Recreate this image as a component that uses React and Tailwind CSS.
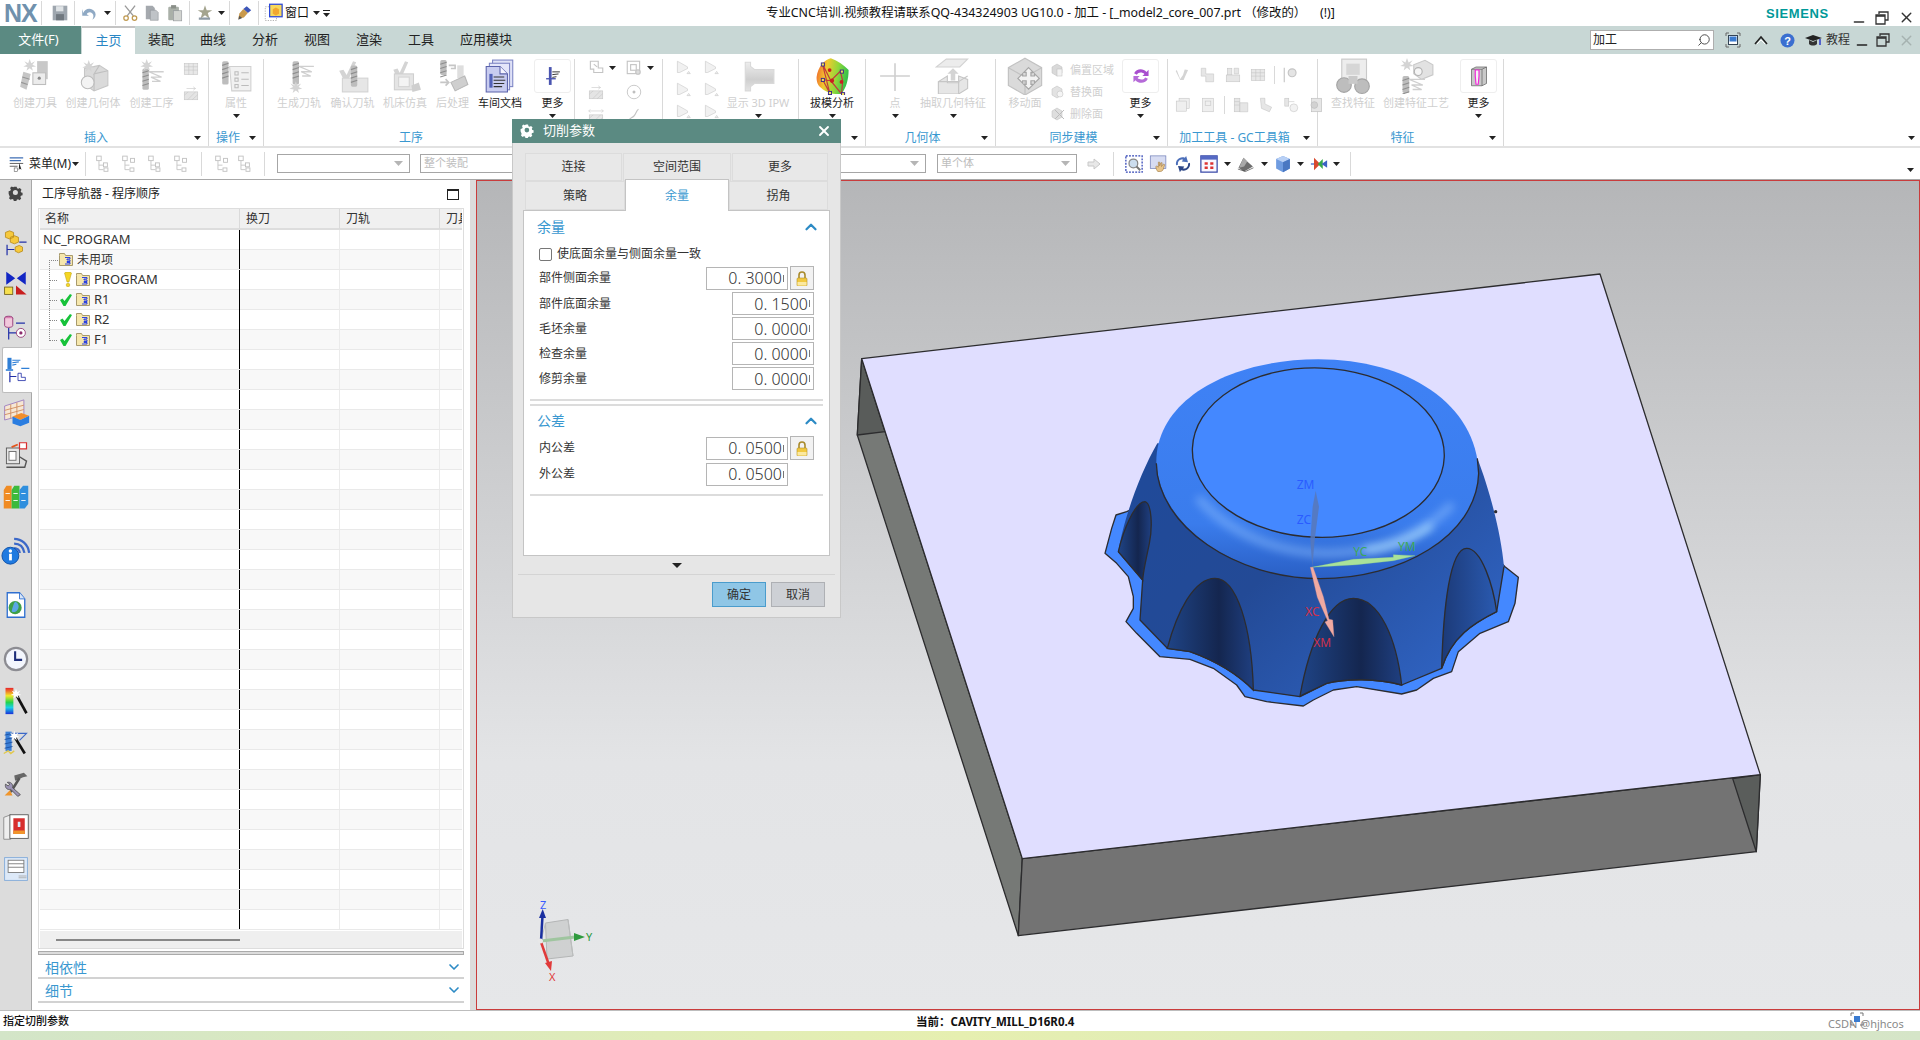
import React from 'react';
import { ChevronUp, ChevronDown, X, Search, Minus } from 'lucide-react';

// ---- tiny helpers ----
const Tri = ({ className = '' }) => (
  <svg width="7" height="4" viewBox="0 0 7 4" className={className}>
    <path d="M0 0h7L3.5 4z" fill="#222" />
  </svg>
);

const Ico = ({ s = 32, children, className = '' }) => (
  <svg width={s} height={s} viewBox="0 0 32 32" className={className}>
    {children}
  </svg>
);

const Burst = ({ x = 10, y = 6, c = '#d4d4d4' }) => (
  <path
    transform={`translate(${x} ${y})`}
    d="M0-6L1.4-2 5-4 2.6-.6 6 1 2 1.6 3 5 0 2.6-3 5-2 1.6-6 1-2.6-.6-5-4-1.4-2z"
    fill={c}
  />
);

const Drill = ({ x = 8, y = 6, h = 20, c = '#bdbdbd' }) => (
  <g transform={`translate(${x} ${y})`}>
    <rect width="6" height={h} rx="1.5" fill={c} />
    <path d={`M0 4l6-2M0 8l6-2M0 12l6-2M0 16l6-2`} stroke="#8e8e8e" strokeWidth="1" />
  </g>
);

const Lines = ({ x = 14, y = 8, c = '#cfcfcf' }) => (
  <path transform={`translate(${x} ${y})`} d="M0 1h14M0 1l12 5H2M2 6l9 4H3" fill="none" stroke={c} strokeWidth="1.2" />
);

// ---- ribbon icons (mostly greyed out) ----
const CreateTool = () => (
  <Ico s={34}>
    <Burst x={11} y={6} />
    <path d="M5 12l7 2-4 15-6-3z" fill="#c6c6c6" />
    <path d="M4 17l7 2M3 22l6 2" stroke="#969696" />
    <rect x="18" y="2" width="10" height="17" fill="#c8c8c8" />
    <rect x="14" y="13" width="12" height="11" fill="#ececec" stroke="#bdbdbd" />
    <circle cx="20" cy="18" r="1.5" fill="#8c8c8c" />
  </Ico>
);
const CreateGeom = () => (
  <Ico s={34}>
    <path d="M8 9l14-3 8 5v14l-13 5-9-6z" fill="#dadada" stroke="#c6c6c6" />
    <path d="M22 6v0l-5 8 13-3M17 14v16" stroke="#c0c0c0" fill="none" />
    <ellipse cx="11" cy="22" rx="6" ry="6" fill="#f3f3f3" stroke="#bcbcbc" />
    <Burst x={12} y={7} />
  </Ico>
);
const CreateOper = () => (
  <Ico s={34}>
    <Drill x={7} y={9} h={20} />
    <Lines x={13} y={11} />
    <Burst x={11} y={6} />
  </Ico>
);
const AttrIcon = () => (
  <Ico s={34}>
    <Drill x={3} y={2} h={22} />
    <path d="M10 7h20v23H12z" fill="#f1f1f1" stroke="#d0d0d0" />
    <path d="M15 12h3v3h-3zM15 18h3v3h-3zM15 24h3v3h-3zM21 13h7M21 19h7M21 25h7" fill="none" stroke="#bcbcbc" />
  </Ico>
);
const GenPath = () => (
  <Ico s={34}>
    <Drill x={10} y={2} h={22} />
    <Lines x={16} y={6} />
    <Burst x={13} y={27} />
  </Ico>
);
const Verify = () => (
  <Ico s={34}>
    <path d="M3 11l4-1 3 5 6-13 3 1-8 18h-3z" fill="#d4d4d4" />
    <rect x="6" y="18" width="24" height="13" fill="#e6e6e6" stroke="#d2d2d2" />
    <Drill x={14} y={6} h={20} />
  </Ico>
);
const MachineSim = () => (
  <Ico s={34}>
    <path d="M5 10l4-1 2 4 5-11 3 1-7 16h-3z" fill="#d4d4d4" />
    <rect x="6" y="14" width="18" height="15" fill="#e4e4e4" stroke="#cfcfcf" />
    <rect x="10" y="17" width="10" height="9" fill="#f4f4f4" stroke="#d4d4d4" />
    <path d="M22 25l7-3 2 7-8 2z" fill="#cfcfcf" />
  </Ico>
);
const PostProc = () => (
  <Ico s={34}>
    <Drill x={4} y={1} h={14} />
    <path d="M12 6h6v3h-4M4 22h8M9 19l3 3-3 3" fill="none" stroke="#c6c6c6" strokeWidth="1.5" />
    <rect x="20" y="6" width="6" height="12" fill="#dedede" />
    <path d="M14 22l13-6 3 8-12 6z" fill="#cfcfcf" stroke="#b8b8b8" />
  </Ico>
);
const ShopDoc = () => (
  <Ico s={34}>
    <rect x="9" y="1" width="19" height="25" fill="#dfe2f7" stroke="#7c84c4" />
    <rect x="6" y="4" width="19" height="25" fill="#e4e6fa" stroke="#7c84c4" />
    <path d="M3 7h13l7 7v17H3z" fill="#c8ccf0" stroke="#5a62aa" />
    <path d="M16 7v7h7" fill="#f5f5ff" stroke="#5a62aa" />
    <rect x="6" y="14" width="3" height="13" fill="#5160b8" />
    <path d="M10 17h10M10 20h11M10 23h10M10 26h8" stroke="#333" strokeWidth="1" />
  </Ico>
);
const MoreTool = () => (
  <Ico s={22}>
    <rect x="10" y="3" width="4" height="26" fill="#4a55b0" />
    <path d="M6 20h14" stroke="#4a55b0" strokeWidth="2" />
    <path d="M15 10h11M15 14l9-1M15 18l6-1" stroke="#333" strokeWidth="1.4" />
  </Ico>
);
const Ipw = () => (
  <Ico s={34}>
    <defs>
      <linearGradient id="ipw" x1="0" y1="0" x2="0" y2="1">
        <stop offset="0" stopColor="#ededed" />
        <stop offset=".6" stopColor="#cfcfcf" />
        <stop offset="1" stopColor="#e4e4e4" />
      </linearGradient>
    </defs>
    <path d="M4 3h5v4l4 3h18v13H13l-4 3v4H4z" fill="url(#ipw)" stroke="#d9d9d9" />
  </Ico>
);
const DraftIcon = () => (
  <Ico s={38}>
    <defs>
      <linearGradient id="draft" x1="0" y1="0" x2="1" y2=".2">
        <stop offset="0" stopColor="#f0562c" />
        <stop offset=".35" stopColor="#f2c92f" />
        <stop offset=".7" stopColor="#8fd83a" />
        <stop offset="1" stopColor="#3bc24a" />
      </linearGradient>
    </defs>
    <path d="M3 17C4 8 10 2 15 1c6 2 11 6 15 10 0 8-2 15-6 20-7 1-14-2-17-5-3-2-4-5-4-9z" fill="url(#draft)" />
    <path d="M8 6l6 24M8 6l7 14 8-8M15 20l9 11M15 20l-7-1M8 19l6 11M23 12l2 8-1 11" fill="none" stroke="#c23b3b" strokeWidth="1" />
    <g fill="#f5e253" stroke="#3a2a8a" strokeWidth=".8">
      <rect x="7" y="5" width="2.6" height="2.6" />
      <rect x="7" y="18" width="2.6" height="2.6" />
      <rect x="24" y="30" width="2.6" height="2.6" />
      <rect x="13" y="29" width="2.6" height="2.6" />
      <rect x="23" y="11" width="2.6" height="2.6" />
    </g>
    <circle cx="14" cy="11" r="1.6" fill="#c91f1f" />
    <circle cx="16" cy="20" r="1.8" fill="#c91f1f" />
    <circle cx="24" cy="21" r="1.6" fill="#c91f1f" />
  </Ico>
);
const PointIcon = () => (
  <Ico s={34}>
    <path d="M16 4v26M2 16h28" stroke="#cfcfcf" strokeWidth="1.5" />
  </Ico>
);
const ExtractIcon = () => (
  <Ico s={36}>
    <path d="M9 0h19l-7 7H0z" fill="#ececec" stroke="#d2d2d2" transform="translate(1 1)" />
    <path d="M14 13h4v6h3l-5 0z M16 9l5 5h-3v6h-4v-6h-3z" fill="#d4d4d4" />
    <path d="M3 21l8-5v6h10v-6l8 3v8l-8 5H3z" fill="#e6e6e6" stroke="#c6c6c6" />
    <path d="M3 21h18v11M21 21l8-5" stroke="#c6c6c6" fill="none" />
  </Ico>
);
const MoveFace = () => (
  <Ico s={38}>
    <path d="M16 1l14 8v15l-14 8-14-8V9z" fill="#dadada" stroke="#c2c2c2" />
    <path d="M2 9l14 8 14-8M16 17v15" fill="none" stroke="#c2c2c2" />
    <path d="M19 9l4 4h-2v3h3v-2l4 4-4 4v-2h-3v3h2l-4 4-4-4h2v-3h-3v2l-4-4 4-4v2h3v-3h-2z" fill="#f3f3f3" stroke="#a6a6a6" />
  </Ico>
);
const SmallGrey = ({ kind = 0, s = 18 }) => {
  const shapes = {
    0: <path d="M6 4h14v12h8v8H12v-6H6zM12 9l6 5" fill="none" stroke="#c4c4c4" strokeWidth="2" />,
    1: <g fill="none" stroke="#c4c4c4" strokeWidth="2"><rect x="4" y="4" width="22" height="22" /><rect x="10" y="10" width="10" height="10" /><circle cx="23" cy="23" r="4" fill="#ddd" /></g>,
    2: <g fill="#e4e4e4" stroke="#c4c4c4"><rect x="4" y="14" width="24" height="14" /><path d="M4 20l7-6M10 28l14-14M18 28l10-9" /><path d="M8 8h16M20 5l4 3-4 3" fill="none" /></g>,
    3: <g fill="#e8e8e8" stroke="#c4c4c4"><rect x="4" y="14" width="24" height="14" /><path d="M4 20l7-6M10 28l14-14M18 28l10-9M3 7h26M6 4L3 7l3 3M26 4l3 3-3 3" fill="none" /></g>,
    4: <g fill="none" stroke="#c4c4c4" strokeWidth="1.6"><circle cx="16" cy="16" r="12" /><circle cx="16" cy="16" r="2" fill="#aaa" /></g>,
    5: <path d="M24 4c-4 2-4 8-8 12s-10 4-10 10" fill="none" stroke="#c4c4c4" strokeWidth="2" />,
    6: <path d="M6 4l4 2 14 8v3L10 24H6zM26 22l3 4h-6z" fill="#f1f1f1" stroke="#c4c4c4" />,
    7: <g fill="#d9d9d9" stroke="#bcbcbc"><path d="M4 10l10-6 10 6v12l-10 6-10-6z" /><rect x="14" y="14" width="10" height="14" fill="#f2f2f2" /></g>,
    8: <g fill="#e2e2e2" stroke="#bcbcbc"><path d="M4 10l10-6 10 6v12l-10 6-10-6z" /><circle cx="20" cy="20" r="6" fill="#f5f5f5" /></g>,
    9: <g fill="#dedede" stroke="#bcbcbc"><path d="M4 10l10-6 10 6v12l-10 6-10-6z" /><path d="M10 8l18 18M10 26L28 8" strokeWidth="2" /></g>,
    10: <path d="M5 7l6 16 5-7 3-10 6 1-8 18h-6L3 9z" fill="#d4d4d4" />,
    11: <g fill="#e6e6e6" stroke="#c4c4c4"><path d="M4 4h8v10h14v14H12V18H4z" /></g>,
    12: <g fill="#e6e6e6" stroke="#c4c4c4"><rect x="6" y="4" width="8" height="12" /><rect x="4" y="16" width="24" height="12" /><path d="M18 4h8v10h-8z" /></g>,
    13: <g fill="#e8e8e8" stroke="#c4c4c4"><rect x="4" y="6" width="24" height="20" /><path d="M4 12h24M4 18h24M12 6v20M20 6v20" /></g>,
    14: <g fill="none" stroke="#c4c4c4" strokeWidth="2"><path d="M4 3v26" /><circle cx="18" cy="12" r="7" fill="#e4e4e4" /></g>,
    15: <g fill="#efefef" stroke="#c4c4c4"><rect x="9" y="4" width="18" height="18" /><rect x="4" y="9" width="18" height="18" /></g>,
    16: <g fill="#efefef" stroke="#c4c4c4"><rect x="6" y="4" width="20" height="24" /><rect x="11" y="9" width="10" height="8" /></g>,
    17: <g fill="#e6e6e6" stroke="#c4c4c4"><rect x="4" y="4" width="10" height="24" /><path d="M14 12h14v16H14z" /><path d="M4 10h10M4 16h10" /></g>,
    18: <g fill="#e6e6e6" stroke="#c4c4c4"><path d="M6 4h8v10l12 6-4 8-14-6z" /></g>,
    19: <g fill="#e6e6e6" stroke="#c4c4c4"><rect x="5" y="4" width="7" height="14" /><path d="M12 10h10" /><circle cx="21" cy="21" r="7" fill="#f2f2f2" /></g>,
    20: <g fill="#e6e6e6" stroke="#b8b8b8"><rect x="8" y="4" width="18" height="24" /><circle cx="13" cy="16" r="6" fill="#d2d2d2" /></g>,
  };
  return <Ico s={s}>{shapes[kind]}</Ico>;
};
const Binoculars = () => (
  <Ico s={36}>
    <rect x="6" y="1" width="22" height="20" fill="#ededed" stroke="#c9c9c9" />
    <rect x="10" y="5" width="12" height="10" fill="#d6d6d6" />
    <circle cx="8" cy="24" r="6.5" fill="#bdbdbd" stroke="#a4a4a4" />
    <circle cx="24" cy="25" r="6.5" fill="#bdbdbd" stroke="#a4a4a4" />
    <path d="M12 16h8v7h-8z" fill="#c9c9c9" />
  </Ico>
);
const FeatureProc = () => (
  <Ico s={36}>
    <path d="M14 6l10-4 7 4v9l-10 4-7-5z" fill="#e2e2e2" stroke="#c9c9c9" />
    <circle cx="18" cy="12" r="3.5" fill="#f5f5f5" stroke="#b2b2b2" />
    <Burst x={8} y={6} />
    <Drill x={4} y={16} h={15} />
    <Lines x={10} y={18} />
  </Ico>
);
const MoreCube = () => (
  <Ico s={24}>
    <path d="M6 7l6-3h14v22l-6 3H6z" fill="#c9c9c9" stroke="#666" />
    <path d="M6 7h14v22M20 7l6-3" fill="none" stroke="#666" />
    <path d="M11 8h5v8l-1 11h-3l-1-11z" fill="#f4f4f4" stroke="#f02bd8" strokeWidth="1.6" />
  </Ico>
);
const MoreSync = () => (
  <Ico s={22}>
    <path d="M6 12c3-7 13-8 18-2l3-3v9h-9l3-3c-3-3-9-3-11 1z" fill="#a94fcf" />
    <path d="M26 20c-3 7-13 8-18 2l-3 3v-9h9l-3 3c3 3 9 3 11-1z" fill="#b56ad8" />
  </Ico>
);

// ---- quick access / toolbar icons ----
const SaveIcon = () => (
  <Ico s={18}>
    <path d="M3 3h26v26H3z" fill="#9ea6ae" />
    <rect x="9" y="4" width="13" height="9" fill="#dfe3e6" />
    <rect x="9" y="18" width="14" height="11" fill="#70787f" />
  </Ico>
);
const UndoIcon = () => (
  <Ico s={18}>
    <path d="M6 16c2-9 16-11 21-1 2 5 0 10-5 13 2-4 3-8 0-11-4-4-8-2-10 1l4 3H4V9z" fill="#8fa9c4" />
  </Ico>
);
const CutIcon = () => (
  <Ico s={18}>
    <path d="M25 3L11 21M7 3l15 18" stroke="#9a9a9a" strokeWidth="2.4" />
    <circle cx="9" cy="25" r="4" fill="none" stroke="#c09a50" strokeWidth="2.2" />
    <circle cx="24" cy="25" r="4" fill="none" stroke="#c09a50" strokeWidth="2.2" />
  </Ico>
);
const CopyIcon = () => (
  <Ico s={18}>
    <path d="M5 3h12l4 4v20H5z" fill="#a5a9ae" />
    <path d="M13 11h10l4 4v14H13z" fill="#bfc3c7" stroke="#8c9095" />
  </Ico>
);
const PasteIcon = () => (
  <Ico s={18}>
    <rect x="4" y="5" width="19" height="24" rx="2" fill="#aab0a8" />
    <rect x="9" y="2" width="9" height="6" fill="#8a8f88" />
    <rect x="13" y="12" width="15" height="18" fill="#d2d4d0" stroke="#8c9095" />
  </Ico>
);
const StarIcon = () => (
  <Ico s={18}>
    <path d="M16 2l3 9h10l-8 5 3 10-8-6-8 6 3-10-8-5h10z" fill="#a4a48e" />
    <rect x="5" y="24" width="20" height="4" fill="#8e9aa4" />
  </Ico>
);
const BrushIcon = () => (
  <Ico s={18}>
    <path d="M19 4l8 7-6 5-8-7z" fill="#3d56b8" />
    <path d="M13 9l8 7-7 8-10 2 2-9z" fill="#c99a4d" />
    <path d="M6 21l5 4-7 3z" fill="#555" />
  </Ico>
);
const WindowIcon = () => (
  <Ico s={20}>
    <rect x="2" y="6" width="18" height="22" fill="none" stroke="#888" strokeDasharray="2 2" />
    <rect x="9" y="2" width="20" height="20" fill="#f7d85b" stroke="#2b47d9" strokeWidth="2" />
    <path d="M14 10l5-3 5 3v7l-5 3-5-3z" fill="#f2a72e" />
  </Ico>
);
const MenuIcon = () => (
  <Ico s={18}>
    <path d="M3 5h24M3 10h20" stroke="#3f6fb5" strokeWidth="2" />
    <path d="M3 15h24M3 20h14" stroke="#555" strokeWidth="1.6" />
    <path d="M20 14l4 12-3-2-2 3z" fill="#222" />
    <rect x="11" y="23" width="6" height="6" fill="none" stroke="#555" />
  </Ico>
);
const Tree = ({ kind = 0 }) => (
  <Ico s={18}>
    <rect x="3" y="2" width="8" height="8" fill="none" stroke="#c0c0c0" strokeWidth="1.6" />
    <path d="M7 10v16M7 18h8M7 26h8" stroke="#c4c4c4" strokeWidth="1.6" fill="none" />
    <rect x={kind ? 17 : 15} y={kind ? 6 : 14} width="7" height="7" fill="none" stroke="#c0c0c0" strokeWidth="1.6" />
    <rect x="16" y="23" width="7" height="6" fill="none" stroke="#c0c0c0" strokeWidth="1.6" />
  </Ico>
);
const ViewFit = () => (
  <Ico s={20}>
    <rect x="3" y="3" width="26" height="26" fill="#fff" stroke="#3144b5" strokeDasharray="3 2" strokeWidth="2" />
    <circle cx="15" cy="15" r="7" fill="#cde" stroke="#888" strokeWidth="2" />
    <path d="M20 20l6 6" stroke="#777" strokeWidth="3" />
  </Ico>
);
const ViewPan = () => (
  <Ico s={20}>
    <rect x="2" y="3" width="25" height="20" fill="#d7dcf2" stroke="#6070b0" />
    <path d="M14 28c-3-4-4-8-2-9l3 2v-8l2 0v6l2-5 2 0-1 6 3-4 2 1-2 7c-1 3-3 4-5 4z" fill="#e8c48a" stroke="#a07c44" />
  </Ico>
);
const ViewRotate = () => (
  <Ico s={20}>
    <path d="M5 18c-2-8 6-15 14-12l2-3 3 10-10-1 2-3c-5-1-9 3-8 8z" fill="#4c6fba" />
    <path d="M27 14c2 8-6 15-14 12l-2 3-3-10 10 1-2 3c5 1 9-3 8-8z" fill="#2c4687" />
  </Ico>
);
const ViewGrid = () => (
  <Ico s={20}>
    <rect x="3" y="3" width="26" height="26" fill="#f7f7ff" stroke="#3a4aa8" strokeWidth="2" />
    <rect x="3" y="3" width="26" height="6" fill="#5569c4" />
    <path d="M9 13h5v4H9zM18 13h5v4h-5zM9 20h5v4H9zM18 20h5v4h-5z" fill="#d33" />
  </Ico>
);
const ViewShade = () => (
  <Ico s={20}>
    <path d="M4 22l8-16 6 6 9 8-14 8z" fill="#6d6d6d" />
    <path d="M12 6l6 6-5 8-8 2z" fill="#a8a8a8" />
    <path d="M3 24l12 4 13-6" stroke="#333" fill="none" />
  </Ico>
);
const ViewCube = () => (
  <Ico s={20}>
    <path d="M5 8l11-5 11 5v15l-11 6-11-6z" fill="#6f9ce0" />
    <path d="M5 8l11 5 11-5-11-5z" fill="#b8d0f5" />
    <path d="M16 13v16l11-6V8z" fill="#4a78c2" />
  </Ico>
);
const ViewTriad = () => (
  <Ico s={20}>
    <path d="M8 6l10 10-10 10z" fill="#d94a2f" />
    <path d="M14 16l8-8v16z" fill="#36a84a" />
    <path d="M20 16l9-6v12z" fill="#3b62c4" />
    <path d="M3 16h5" stroke="#3b62c4" strokeWidth="2" />
  </Ico>
);

// ---- navigator strip icons ----
const Cubes = () => (
  <Ico s={26}>
    <path d="M3 3l5-2 5 2v6l-5 2-5-2zM9 9l5-2 5 2v6l-5 2-5-2z" fill="#f6c93d" stroke="#b88a1a" />
    <path d="M15 21l5-2 4 2v5l-5 2-4-2z" fill="#f6c93d" stroke="#b88a1a" />
    <path d="M5 18v13M5 24h9M20 15h9" stroke="#2230a8" strokeWidth="1.5" fill="none" />
  </Ico>
);
const Bowtie = () => (
  <Ico s={26}>
    <path d="M4 2l11 8-11 8zM28 2L17 10l11 8z" fill="#1226c4" />
    <rect x="2" y="21" width="10" height="9" fill="#f7e04f" stroke="#6a5a10" />
    <path d="M16 19l13 11H16z" fill="#c81e1e" />
  </Ico>
);
const PartNav = () => (
  <Ico s={26}>
    <ellipse cx="7" cy="4" rx="5" ry="2.5" fill="#d980b2" stroke="#8c2a6c" />
    <path d="M2 4v9c0 3 10 3 10 0V4" fill="#f1c8dc" stroke="#8c2a6c" />
    <path d="M7 16v14M7 22h9M16 10h11" stroke="#2230a8" strokeWidth="1.5" fill="none" />
    <circle cx="22" cy="22" r="5.5" fill="#fff" stroke="#8c2a6c" />
    <circle cx="22" cy="22" r="2" fill="#8c2a6c" />
  </Ico>
);
const OpNav = () => (
  <Ico s={26}>
    <rect x="3" y="1" width="5" height="14" fill="#2f7fd6" />
    <path d="M1 16h9" stroke="#2f7fd6" strokeWidth="2" />
    <path d="M9 4h10M9 7l8-1M9 10l5-1M20 14h10" stroke="#2f7fd6" strokeWidth="1.3" fill="none" />
    <path d="M6 18v13M6 24h8" stroke="#2230a8" strokeWidth="1.5" fill="none" />
    <path d="M16 20h4v5h5v4h-9z" fill="#fff" stroke="#2230a8" />
  </Ico>
);
const TableNav = () => (
  <Ico s={28}>
    <path d="M3 8l22-7v17L3 24z" fill="#f6e7d4" stroke="#9a7cc0" />
    <path d="M3 13l22-6M3 18l22-6M10 6v16M17 4v16" stroke="#d08a5c" />
    <path d="M12 20l10-4 9 3-10 5z" fill="#f28e2b" />
    <path d="M12 20v8l9 3v-7zM21 24v7l10-4v-8z" fill="#2a7de0" />
  </Ico>
);
const MachineNav = () => (
  <Ico s={28}>
    <rect x="5" y="8" width="15" height="18" fill="#e6e6e6" stroke="#555" />
    <rect x="8" y="12" width="8" height="10" fill="#fff" stroke="#666" />
    <path d="M20 18l8 5-2 7H5" fill="none" stroke="#555" strokeWidth="1.6" />
    <path d="M11 7l7-3" stroke="#e2561d" strokeWidth="2" />
    <path d="M20 2h8v7h-8z" fill="#fff" stroke="#d92e2e" strokeWidth="1.4" />
  </Ico>
);
const Books = () => (
  <Ico s={28}>
    <path d="M2 8l3-5h6v26H2z" fill="#f08b23" />
    <path d="M11 8l3-5h6v26h-9z" fill="#3cba3c" />
    <path d="M20 8l4-5h6v21l-4 5h-6z" fill="#2f8fde" />
    <path d="M4 12h5M13 12h5M22 12h5M4 20h5M13 20h5M22 20h5" stroke="#fff" />
  </Ico>
);
const InfoFeed = () => (
  <Ico s={30}>
    <path d="M14 3c8 0 15 6 16 15M14 8c6 0 10 4 11 10M14 13c3 0 6 2 6 5" fill="none" stroke="#3b68c8" strokeWidth="2.4" />
    <circle cx="10" cy="21" r="9" fill="#1f7ae0" stroke="#0d4fa8" />
    <rect x="8.6" y="19" width="3" height="7" fill="#fff" />
    <circle cx="10" cy="16" r="1.8" fill="#fff" />
  </Ico>
);
const GlobeDoc = () => (
  <Ico s={28}>
    <path d="M6 2h14l6 7v21H6z" fill="#fff" stroke="#2f6fd0" strokeWidth="1.5" />
    <path d="M20 2v7h6" fill="#d9e6f8" stroke="#2f6fd0" />
    <circle cx="15" cy="19" r="7.5" fill="#3ea04a" />
    <path d="M15 12c4 2 5 6 3 9-2 3-5 4-7 2 1-4 2-8 4-11z" fill="#5ba7e6" />
  </Ico>
);
const Clock = () => (
  <Ico s={28}>
    <circle cx="16" cy="16" r="14" fill="#8c8c92" />
    <circle cx="16" cy="16" r="11.5" fill="#f3f6fd" />
    <path d="M15 7v10h8" stroke="#1e2e7a" strokeWidth="2.4" fill="none" />
  </Ico>
);
const Rainbow = () => (
  <Ico s={28}>
    <defs>
      <linearGradient id="rb" x1="0" y1="0" x2="0" y2="1">
        <stop offset="0" stopColor="#e8222a" />
        <stop offset=".3" stopColor="#f4e82a" />
        <stop offset=".55" stopColor="#22d34a" />
        <stop offset=".75" stopColor="#1ad0e8" />
        <stop offset="1" stopColor="#1a2fd8" />
      </linearGradient>
    </defs>
    <rect x="4" y="1" width="9" height="30" fill="url(#rb)" />
    <path d="M17 10l11 20" stroke="#111" strokeWidth="3" />
    <Burst x={16} y={8} c="#fff" />
  </Ico>
);
const DrillWand = () => (
  <Ico s={28}>
    <rect x="4" y="3" width="7" height="22" fill="#3b7fd6" />
    <path d="M3 7l9-2M3 12l9-2M3 17l9-2M3 22l9-2" stroke="#1b4fa0" />
    <path d="M12 5h16l-8 8M12 9l6 4" fill="none" stroke="#3b68c8" strokeWidth="1.3" />
    <path d="M2 28l5-3 3 3 4-3" stroke="#e2c84c" strokeWidth="1.6" fill="none" />
    <path d="M15 10l11 18" stroke="#111" strokeWidth="3" />
    <Burst x={14} y={8} c="#fff" />
  </Ico>
);
const Wrench = () => (
  <Ico s={28}>
    <path d="M14 5l11-3 4 4-5 1-9 4z" fill="#666" />
    <path d="M20 8L10 24" stroke="#555" strokeWidth="3" />
    <path d="M6 13c4-1 7 2 6 6l9 8-3 2-8-8c-4 1-7-2-6-6l3 2 2-2z" fill="#9b93b5" stroke="#555" />
    <path d="M3 28l6-6 3 6z" fill="#f0952b" />
  </Ico>
);
const RedBook = () => (
  <Ico s={28}>
    <path d="M2 5l8-3v28l-8 0z" fill="#eee" stroke="#888" />
    <rect x="9" y="2" width="21" height="27" fill="#fff" stroke="#555" />
    <rect x="13" y="6" width="13" height="18" fill="#d72e2e" />
    <rect x="13" y="20" width="13" height="4" fill="#f0952b" />
    <path d="M18 10h3v6h-3z" fill="#d8ecff" />
  </Ico>
);
const WindowDoc = () => (
  <Ico s={28}>
    <rect x="3" y="3" width="26" height="26" fill="#dde9f8" stroke="#7fa8d8" />
    <rect x="7" y="6" width="18" height="14" fill="#fff" stroke="#777" />
    <path d="M7 10h18M7 14h18" stroke="#777" />
    <path d="M19 24h9M19 26h9" stroke="#aaa" />
  </Ico>
);
const Gear = ({ c = '#333', s = 16 }) => (
  <Ico s={s}>
    <path
      fillRule="evenodd"
      fill={c}
      d="M13 2h6l1 4 3 1.300 3.500-2 4 4-2 3.500 1.300 3 3.200.700v6l-4 1-1.200 3 2 3.500-4 4-3.500-2-3 1.300-1 3.200h-6l-1-4-3-1.200-3.500 2-4-4 2-3.500-1.300-3L0 19v-6l4-1 1.300-3-2-3.500 4-4 3.500 2 2-1zM16 10a6 6 0 100 12 6 6 0 000-12z"
      transform="scale(.9) translate(1.500 -.5)"
    />
  </Ico>
);
const Folder = () => (
  <svg width="14" height="13" viewBox="0 0 14 13">
    <path d="M.5 2.500V.5h5l1 2h7v10H.5z" fill="#f6e7ad" stroke="#a89a6c" />
    <path d="M6 4.500h5v1.500H8v1h3v1.500H8v1h3V11H6" fill="none" stroke="#1630e6" strokeWidth=".9" />
  </svg>
);
const Check = () => (
  <svg width="12" height="12" viewBox="0 0 12 12">
    <path d="M0 6l2.500-1.500L4.500 7 10 0l2 1-6.500 11H3.500z" fill="#17c23a" />
  </svg>
);
const Bang = () => (
  <svg width="8" height="15" viewBox="0 0 8 15">
    <path d="M.5 1C2-.5 6-.5 7.500 1L5 10H3z" fill="#f5d624" stroke="#b79d12" strokeWidth=".5" />
    <circle cx="4" cy="13" r="1.800" fill="#f5d624" stroke="#b79d12" strokeWidth=".5" />
  </svg>
);
const LockIcon = () => (
  <svg width="12" height="15" viewBox="0 0 12 15">
    <path d="M3 7V4a3 3 0 016 0v3" fill="none" stroke="#a88a2c" strokeWidth="1.600" />
    <rect x="1" y="7" width="10" height="8" rx="1" fill="#f2c93f" stroke="#b3902a" strokeWidth=".6" />
    <rect x="1.500" y="11" width="9" height="3.500" fill="#fbe9a0" />
  </svg>
);

// ---- ribbon parts ----
const RibbonBtn = ({ w, icon, label, muted = true, arrow = false }) => (
  <div className={`flex flex-col items-center shrink-0 ${w}`}>
    <div className="h-[34px] flex items-center justify-center">{icon}</div>
    <div className={`mt-[2px] h-4 leading-4 text-[11px] whitespace-nowrap ${muted ? 'text-[#cfcfcf]' : 'text-[#222]'}`}>{label}</div>
    {arrow && <Tri className="mt-[3px]" />}
  </div>
);

const MoreBtn = ({ icon, w = 'w-[37px]', ml = 'ml-2' }) => (
  <div className={`flex flex-col items-center shrink-0 ${w} ${ml}`}>
    <div className="w-[37px] h-[34px] border border-[#eeeeee] rounded-[3px] flex items-center justify-center">{icon}</div>
    <div className="mt-[2px] h-4 leading-4 text-[11px] text-[#222]">更多</div>
    <Tri className="mt-[3px]" />
  </div>
);

const SmallRow = ({ kind, label }) => (
  <div className="flex items-center gap-1 h-[22px]">
    <SmallGrey kind={kind} s={16} />
    <span className="text-[11px] text-[#cfcfcf] whitespace-nowrap">{label}</span>
  </div>
);

const Group = ({ w, label, pad = '', arrow = true, children }) => (
  <div className={`flex flex-col h-[87px] shrink-0 border-r border-[#d9d9d9] ${w}`}>
    <div className={`flex flex-1 min-h-0 ${pad}`}>{children}</div>
    <div className="relative h-[16px] pr-[16px] text-center text-[12px] leading-4 text-[#3a98d0] whitespace-nowrap">
      {label}
      {arrow && <Tri className="absolute right-[7px] top-[6px]" />}
    </div>
  </div>
);

const Ribbon = () => (
  <div className="relative flex h-[94px] pt-[5px] bg-white border-b-2 border-[#e2e2e2]">
    <Group w="w-[209px]" label="插入" pad="pl-[6px]">
      <RibbonBtn w="w-[58px]" icon={<CreateTool />} label="创建刀具" />
      <RibbonBtn w="w-[58px]" icon={<CreateGeom />} label="创建几何体" />
      <RibbonBtn w="w-[59px]" icon={<CreateOper />} label="创建工序" />
      <div className="w-[20px] flex flex-col items-center gap-[6px] pt-[1px]">
        <SmallGrey kind={13} />
        <SmallGrey kind={2} />
      </div>
    </Group>
    <Group w="w-[55px]" label="操作">
      <RibbonBtn w="w-full" icon={<AttrIcon />} label="属性" arrow />
    </Group>
    <Group w="w-[311px]" label="工序" pad="pl-[8px]">
      <RibbonBtn w="w-[54px]" icon={<GenPath />} label="生成刀轨" />
      <RibbonBtn w="w-[53px]" icon={<Verify />} label="确认刀轨" />
      <RibbonBtn w="w-[52px]" icon={<MachineSim />} label="机床仿真" />
      <RibbonBtn w="w-[43px]" icon={<PostProc />} label="后处理" />
      <RibbonBtn w="w-[52px]" icon={<ShopDoc />} label="车间文档" muted={false} />
      <MoreBtn icon={<MoreTool />} />
    </Group>
    <Group w="w-[88px]" label="" arrow={false}>
      <div className="grid grid-cols-2 w-full pl-[12px] gap-y-[6px] content-start">
        {[0, 1, 2, 4, 3, 5].map((k) => (
          <div key={k} className="flex items-center h-[18px] w-[37px] gap-1">
            <SmallGrey kind={k} />
            {k < 2 && <Tri />}
          </div>
        ))}
      </div>
    </Group>
    <Group w="w-[136px]" label="" arrow={false}>
      <div className="w-[57px] pl-[11px] grid grid-cols-2 gap-x-[9px] gap-y-[4px] content-start shrink-0">
        {[6, 6, 6, 6, 6, 6].map((k, i) => (
          <SmallGrey key={i} kind={k} />
        ))}
      </div>
      <RibbonBtn w="w-[76px]" icon={<Ipw />} label="显示 3D IPW" arrow />
    </Group>
    <Group w="w-[67px]" label="">
      <RibbonBtn w="w-full" icon={<DraftIcon />} label="拔模分析" muted={false} arrow />
    </Group>
    <Group w="w-[130px]" label="几何体" pad="pl-[4px]">
      <RibbonBtn w="w-[50px]" icon={<PointIcon />} label="点" arrow />
      <RibbonBtn w="w-[66px]" icon={<ExtractIcon />} label="抽取几何特征" arrow />
    </Group>
    <Group w="w-[172px]" label="同步建模" pad="pl-[6px]">
      <RibbonBtn w="w-[46px]" icon={<MoveFace />} label="移动面" />
      <div className="w-[72px] pl-[2px] shrink-0">
        <SmallRow kind={7} label="偏置区域" />
        <SmallRow kind={8} label="替换面" />
        <SmallRow kind={9} label="删除面" />
      </div>
      <MoreBtn icon={<MoreSync />} ml="ml-[2px]" />
    </Group>
    <Group w="w-[150px]" label="加工工具 - GC工具箱" pad="pl-[6px]">
      <div className="flex flex-col gap-[12px] pt-[7px]">
        <div className="flex items-center gap-[7px]">
          {[10, 11, 12, 13].map((k) => (
            <SmallGrey key={k} kind={k} />
          ))}
          <span className="w-px h-[18px] bg-[#d9d9d9]" />
          <SmallGrey kind={14} />
        </div>
        <div className="flex items-center gap-[7px]">
          <SmallGrey kind={15} />
          <SmallGrey kind={16} />
          <span className="w-px h-[18px] bg-[#d9d9d9]" />
          {[17, 18, 19, 20].map((k) => (
            <SmallGrey key={k} kind={k} />
          ))}
        </div>
      </div>
    </Group>
    <Group w="w-[186px]" label="特征" pad="pl-[5px]">
      <RibbonBtn w="w-[60px]" icon={<Binoculars />} label="查找特征" />
      <RibbonBtn w="w-[66px]" icon={<FeatureProc />} label="创建特征工艺" />
      <MoreBtn icon={<MoreCube />} ml="ml-[11px]" />
    </Group>
    <Tri className="absolute right-[5px] top-[82px]" />
  </div>
);

const Select = ({ w, text = '' }) => (
  <div className={`h-[19px] flex items-center justify-between px-[3px] border border-[#a6a6a6] bg-white shrink-0 ${w}`}>
    <span className="text-[11px] text-[#bdbdbd] whitespace-nowrap">{text}</span>
    <svg width="9" height="5" viewBox="0 0 9 5" className="mr-[3px]">
      <path d="M0 0h9L4.500 5z" fill="#b5b5b5" />
    </svg>
  </div>
);
const Sep = ({ className = '' }) => <span className={`w-px h-[24px] bg-[#d9d9d9] shrink-0 ${className}`} />;

const Toolbar = () => (
  <div className="relative flex items-center h-[31px] bg-white">
    <div className="ml-[8px] mr-[3px]"><MenuIcon /></div>
    <span className="text-[12px] text-[#222] w-[43px] whitespace-nowrap">菜单(M)</span>
    <Tri />
    <Sep className="ml-[6px] mr-[9px]" />
    <div className="flex gap-[8px]">
      <Tree />
      <Tree kind={1} />
      <Tree />
      <Tree kind={1} />
    </div>
    <Sep className="ml-[10px] mr-[12px]" />
    <div className="flex gap-[5px]">
      <Tree kind={1} />
      <Tree />
    </div>
    <Sep className="ml-[9px] mr-[12px]" />
    <Select w="w-[133px]" />
    <Select w="w-[506px] ml-[10px]" text="整个装配" />
    <Select w="w-[140px] ml-[11px]" text="单个体" />
    <svg width="14" height="12" viewBox="0 0 14 12" className="ml-[10px] mr-[12px]">
      <path d="M1 4h6V1l6 5-6 5V8H1z" fill="#e8e8e8" stroke="#c8c8c8" />
    </svg>
    <Sep className="mr-[10px]" />
    <div className="flex items-center">
      <ViewFit />
      <span className="w-[5px]" />
      <ViewPan />
      <span className="w-[4px]" />
      <ViewRotate />
      <span className="w-[6px]" />
      <ViewGrid />
      <Tri className="ml-[5px] mr-[5px]" />
      <ViewShade />
      <Tri className="ml-[5px] mr-[5px]" />
      <ViewCube />
      <Tri className="ml-[4px] mr-[5px]" />
      <ViewTriad />
      <Tri className="ml-[4px]" />
    </div>
    <Sep className="ml-[10px]" />
    <Tri className="absolute right-[6px] top-[20px]" />
  </div>
);

// ---- navigator ----
const treeRows = [
  { key: 'nc', label: 'NC_PROGRAM', pad: 'pl-[3px]' },
  { key: 'un', label: '未用项', pad: 'pl-[19px]', dot: true, folder: true, cjk: true },
  { key: 'pr', label: 'PROGRAM', pad: 'pl-[24px]', dot: true, folder: true, status: 'bang' },
  { key: 'r1', label: 'R1', pad: 'pl-[20px]', dot: true, folder: true, status: 'check' },
  { key: 'r2', label: 'R2', pad: 'pl-[20px]', dot: true, folder: true, status: 'check' },
  { key: 'f1', label: 'F1', pad: 'pl-[20px]', dot: true, folder: true, status: 'check' },
];
const rows = Array.from({ length: 35 }, (_, i) => treeRows[i] || { key: `e${i}` });

const TreeTable = () => (
  <div className="mx-[6px] border border-[#dddddd] pl-[1px] pr-[1px]">
    <div className="grid grid-cols-[200px_100px_100px_1fr] h-[21px] bg-[#f0f0f0] border-b-2 border-[#dddddd] text-[12px] text-[#333] leading-[20px]">
      <span className="pl-[5px] border-r border-[#dadada]">名称</span>
      <span className="pl-[6px] border-r border-[#dadada]">换刀</span>
      <span className="pl-[6px] border-r border-[#dadada]">刀轨</span>
      <span className="pl-[6px] overflow-hidden whitespace-nowrap">刀具</span>
    </div>
    <div className="relative">
      {rows.map((r, i) => (
        <div
          key={r.key}
          className={`grid grid-cols-[200px_100px_100px_1fr] h-[20px] border-b border-[#e9e9e9] ${i % 2 ? 'bg-[#f8f8f8]' : 'bg-white'}`}
        >
          <div className={`flex items-center gap-[4px] border-r border-black text-[#333] whitespace-nowrap ${r.cjk ? 'text-[12px]' : 'text-[13px]'} ${r.pad || ''}`}>
            {r.status === 'bang' && <Bang />}
            {r.status === 'check' && <Check />}
            {r.folder && <Folder />}
            {r.label && <span>{r.label}</span>}
          </div>
          <div className="border-r border-[#ebebeb]" />
          <div className="border-r border-[#ebebeb]" />
          <div />
        </div>
      ))}
      {/* dotted tree lines */}
      <div className="absolute left-[9px] top-[30px] h-[81px] w-[8px] border-l border-dotted border-[#888]" />
      {[30, 50, 70, 90, 110].map((t, i) => (
        <div
          key={t}
          className={`absolute left-[9px] border-t border-dotted border-[#888] ${i === 0 ? 'w-[9px] top-[30px]' : i === 1 ? 'w-[8px] top-[50px]' : i === 2 ? 'w-[8px] top-[70px]' : i === 3 ? 'w-[8px] top-[90px]' : 'w-[8px] top-[110px]'}`}
        />
      ))}
    </div>
    <div className="h-[17px] mt-[1px] bg-[#efefef] flex items-center pl-[16px]">
      <span className="block w-[184px] h-[2px] bg-[#888888]" />
    </div>
  </div>
);

const Navigator = () => (
  <div className="w-[438px] bg-white flex flex-col shrink-0">
    <div className="h-[28px] flex items-center justify-between pl-[10px] pr-[11px] text-[12px] text-[#222]">
      <span>工序导航器 - 程序顺序</span>
      <span className="w-[12px] h-[11px] border border-[#222] border-t-2" />
    </div>
    <TreeTable />
    <div className="mx-[6px] mt-[2px] h-[4px] bg-[#dcdcdc] border border-[#aaaaaa]" />
    <div className="mx-[6px] h-[22px] mt-[2px] flex items-center justify-between pl-[7px] pr-[2px] text-[14px] text-[#3a98d0] border-b-2 border-[#d2d2d2]">
      <span>相依性</span>
      <ChevronDown size={16} strokeWidth={2.5} className="text-[#2d8bc5]" />
    </div>
    <div className="mx-[6px] h-[24px] flex items-center justify-between pl-[7px] pr-[2px] text-[14px] text-[#3a98d0] border-b-2 border-[#d2d2d2]">
      <span>细节</span>
      <ChevronDown size={16} strokeWidth={2.5} className="text-[#2d8bc5]" />
    </div>
  </div>
);

const stripItems = [
  [<Cubes />, 'mt-[19px]'],
  [<Bowtie />, 'mt-[4px]'],
  [<PartNav />, 'mt-[9px]'],
  null,
  [<TableNav />, 'mt-[2px]'],
  [<MachineNav />, 'mt-[6px]'],
  [<Books />, 'mt-[6px]'],
  [<InfoFeed />, 'mt-[18px]'],
  [<GlobeDoc />, 'mt-[18px]'],
  [<Clock />, 'mt-[18px]'],
  [<Rainbow />, 'mt-[6px]'],
  [<DrillWand />, 'mt-[6px]'],
  [<Wrench />, 'mt-[6px]'],
  [<RedBook />, 'mt-[6px]'],
  [<WindowDoc />, 'mt-[6px]'],
];

const LeftStrip = () => (
  <div className="w-[32px] shrink-0 bg-[#dcdcdc] border-r border-[#a8a8a8] flex flex-col">
    <div className="h-[26px] flex items-center justify-center">
      <Gear c="#444" s={15} />
    </div>
    {stripItems.map((item, i) =>
      item ? (
        <div key={i} className={`h-[36px] flex items-center justify-center ${item[1]}`}>
          {item[0]}
        </div>
      ) : (
        <div key={i} className="mt-[1px] ml-[2px] -mr-[1px] h-[46px] bg-white border border-r-0 border-[#bdbdbd] rounded-l-[2px] flex items-center justify-center">
          <OpNav />
        </div>
      )
    )}
  </div>
);

// ---- graphics window (drawing in page coordinates) ----
const Knob = () => (
  <g transform="translate(1080 340) scale(.33333)">
    {/* flange */}
    <path
      d="M140 515L108 525 95 565 75 640 110 670 145 710 160 770 160 805 138 845 170 880 240 950 330 958 400 985 470 1035 495 1070 560 1085 670 1098 700 1080 760 1050 830 1040 965 1062 1010 1050 1060 1015 1115 995 1135 935 1200 880 1285 845 1305 790 1315 712 1275 680 1000 400 400 400z"
      fill="#4488ff"
      stroke="#2c2c30"
      strokeWidth="4"
      strokeLinejoin="round"
    />
    {/* body wall */}
    <path
      d="M115 635C130 540 180 400 232 310L1192 355C1225 440 1262 570 1272 680L1250 815C1180 850 1115 890 1085 985L965 1035C890 1015 800 1015 740 1030L660 1070 520 1050C470 1000 400 960 330 935L262 925 180 840 188 720z"
      fill="url(#wall)"
    />
    <path
      d="M115 635L188 720 180 840 262 925 330 935C400 960 470 1000 520 1050L660 1070 740 1030C800 1015 890 1015 965 1035L1085 985C1115 890 1180 850 1250 815L1272 680"
      fill="none"
      stroke="#2c2c30"
      strokeWidth="4"
      strokeLinejoin="round"
    />
    {/* arches */}
    <path d="M115 635C130 570 165 485 195 485C215 490 218 560 208 610C198 660 190 690 188 720z" fill="url(#arch)" stroke="#2c2c30" strokeWidth="4" />
    <path d="M262 925C290 820 340 715 405 715C470 715 515 860 520 1050C470 1000 400 960 330 935z" fill="url(#arch)" stroke="#2c2c30" strokeWidth="4" />
    <path d="M660 1068C690 900 750 775 820 775C900 775 950 900 965 1035C890 1015 800 1015 740 1030z" fill="url(#arch)" stroke="#2c2c30" strokeWidth="4" />
    <path d="M1085 985C1090 800 1110 625 1160 625C1205 625 1240 740 1250 815C1180 850 1115 890 1085 985z" fill="url(#arch2)" stroke="#2c2c30" strokeWidth="4" />
    <circle cx="1247" cy="515" r="5" fill="#2c2c30" />
    {/* dome */}
    <path d="M229 370C225 180 450 58 715 58C980 58 1190 190 1196 400C1190 590 960 716 720 716C470 716 240 560 229 370z" fill="url(#dome)" />
    <path d="M360 480C460 590 610 640 740 640C880 640 1020 590 1110 500" fill="none" stroke="#8fc0ff" strokeWidth="26" strokeLinecap="round" filter="url(#soft)" opacity=".5" />
    <path d="M860 630C920 625 990 600 1050 560" fill="none" stroke="#b4e4ff" strokeWidth="18" strokeLinecap="round" filter="url(#soft)" opacity=".8" />
    <path d="M229 370C232 560 470 716 720 716C960 716 1190 590 1196 400L1192 355" fill="none" stroke="#2c2c30" strokeWidth="4" />
    <ellipse cx="715" cy="338" rx="378" ry="254" transform="rotate(2 715 338)" fill="#4488ff" stroke="#2c2c30" strokeWidth="4" />
    {/* csys */}
    <path d="M707 452L717 500 704 600 697 682 691 600 698 500z" fill="#5878b8" opacity=".85" />
    <path d="M695 682L820 658 940 652 940 644 1005 647 940 662 830 674z" fill="#a9e29a" stroke="#8fce8a" strokeWidth="1" />
    <path d="M691 682L699 682 730 770 747 838 758 840 762 890 735 846 743 842 712 772z" fill="#f0aaa2" stroke="#e89890" strokeWidth="1" />
    <g fontSize="36" fontFamily="'Noto Sans',sans-serif">
      <text x="650" y="446" fill="#2a5cff">ZM</text>
      <text x="650" y="553" fill="#2a5cff">ZC</text>
      <text x="820" y="647" fill="#3da85a">YC</text>
      <text x="954" y="632" fill="#3da85a">YM</text>
      <text x="676" y="827" fill="#d0304a">XC</text>
      <text x="700" y="922" fill="#d0304a">XM</text>
    </g>
  </g>
);

const Triad = () => (
  <g>
    <path d="M545.500 923L568 919.500 573 956 547 959z" fill="#c6c8c8" fillOpacity=".7" stroke="#b4b6b6" />
    <path d="M545.500 923L541 941M568 919.500L573 956M541 941L547 959" stroke="#bcbebe" fill="none" />
    <path d="M541 941L575 937" stroke="#9fc59f" strokeWidth="3" />
    <path d="M574 933L585 937 574 941z" fill="#2f9a3e" />
    <path d="M541 941L542.500 916" stroke="#1a2fa0" strokeWidth="2.500" />
    <path d="M539 918L542.700 909 546 918z" fill="#1a2fa0" />
    <path d="M541 942L549 965" stroke="#e03a3a" strokeWidth="2.500" />
    <path d="M545 963L551 971 552 961z" fill="#e03a3a" />
    <circle cx="540.500" cy="941" r="2.500" fill="#e8e8e8" />
    <g fontSize="11" fontFamily="'Noto Sans',sans-serif">
      <text x="540" y="909" fill="#3a5cff">Z</text>
      <text x="586" y="941" fill="#2f9a3e">Y</text>
      <text x="549" y="981" fill="#e03a3a">X</text>
    </g>
  </g>
);

const Graphics = () => (
  <div className="relative flex-1 min-w-0 border border-[#c93c3c] bg-gradient-to-b from-[#b5b6b8] via-[#e3e4e6] via-70% to-[#e6e7e9]">
    <svg viewBox="477 181 1442 828" className="block w-full h-full">
      <defs>
        <linearGradient id="wall" x1="0" y1="0" x2="1" y2=".7">
          <stop offset="0" stopColor="#1f4a9a" />
          <stop offset=".5" stopColor="#234a96" />
          <stop offset="1" stopColor="#2f62c0" />
        </linearGradient>
        <linearGradient id="arch" x1="0" y1="0" x2="1" y2="0">
          <stop offset="0" stopColor="#1f4486" />
          <stop offset=".6" stopColor="#14264f" />
          <stop offset="1" stopColor="#1f3f80" />
        </linearGradient>
        <linearGradient id="arch2" x1="0" y1="0" x2="1" y2="0">
          <stop offset="0" stopColor="#1c3a78" />
          <stop offset="1" stopColor="#2a5ab0" />
        </linearGradient>
        <linearGradient id="dome" x1="0" y1="0" x2="0" y2="1">
          <stop offset="0" stopColor="#3f82f6" />
          <stop offset=".75" stopColor="#3a7cec" />
          <stop offset="1" stopColor="#2a5fc4" />
        </linearGradient>
        <filter id="soft" x="-20%" y="-40%" width="140%" height="180%">
          <feGaussianBlur stdDeviation="12" />
        </filter>
      </defs>
      {/* plate */}
      <path d="M861.700 358.600L857.300 435 1018.300 935.600 1022.300 858.600z" fill="#767976" stroke="#2c2c2e" strokeWidth="1.300" strokeLinejoin="round" />
      <path d="M861.700 358.600L857.300 435 885 431.700z" fill="#595c5a" stroke="#2c2c2e" strokeWidth="1.300" strokeLinejoin="round" />
      <path d="M1022.300 858.600L1018.300 935.600 1756.300 851.700 1760.300 774.600z" fill="#737373" stroke="#2c2c2e" strokeWidth="1.300" strokeLinejoin="round" />
      <path d="M1732.700 778.600L1760.300 774.600 1756.300 851.700z" fill="#5a5d5b" stroke="#2c2c2e" strokeWidth="1.300" strokeLinejoin="round" />
      <path d="M861.700 358.600L1600 274 1760.300 774.600 1022.300 858.600z" fill="#e0deff" stroke="#2c2c2e" strokeWidth="1.300" strokeLinejoin="round" />
      <Knob />
      <Triad />
    </svg>
  </div>
);

// ---- dialog ----
const NumInput = ({ v, w = 'w-[82px]' }) => (
  <div className={`h-[23px] border border-[#b5b5b5] bg-white flex items-center justify-end pr-[3px] shrink-0 ${w}`}>
    <span className="font-['Noto_Sans',sans-serif] text-[16px] leading-none text-[#333] font-light whitespace-pre">{v}</span>
    <span className="ml-[1px] w-px h-[7px] bg-[#777]" />
  </div>
);
const LockBtn = () => (
  <div className="ml-[2px] w-[24px] h-[24px] border border-[#b5b5b5] bg-[#f2f2f2] flex items-center justify-center shrink-0">
    <LockIcon />
  </div>
);
const ParamRow = ({ label, v, lock = false, h = 'h-[25px]' }) => (
  <div className={`flex items-center justify-between ${h}`}>
    <span className="text-[12px] text-[#333]">{label}</span>
    {lock ? (
      <div className="flex items-center">
        <NumInput v={v} />
        <LockBtn />
      </div>
    ) : (
      <NumInput v={v} />
    )}
  </div>
);
const SectionHead = ({ title }) => (
  <div className="flex items-center justify-between pl-[13px] pr-[9px] text-[14px] text-[#3a98d0]">
    <span>{title}</span>
    <ChevronUp size={18} strokeWidth={3} className="text-[#2d8bc5]" />
  </div>
);
const TabCell = ({ w, label, h = 'h-[29px]', active = false }) => (
  <div
    className={`flex items-center justify-center shrink-0 text-[12px] ${w} ${
      active
        ? 'h-[32px] -mt-[2px] bg-white border border-b-0 border-[#c4c4c4] text-[#3a98d0] relative z-10 -mb-[1px]'
        : `bg-[#e8e8e8] border border-[#dcdcdc] text-[#333] ${h}`
    }`}
  >
    {label}
  </div>
);

const CutParamsDialog = () => (
  <div className="absolute left-[512px] top-[119px] w-[329px] z-20 bg-[#e6e6e6] border border-t-0 border-[#c8c8c8] flex flex-col h-[499px]">
    <div className="h-[24px] -mx-px bg-[#5b8a82] flex items-center pl-[8px] pr-[9px] text-white text-[13px] shrink-0">
      <Gear c="#ffffff" s={14} />
      <span className="ml-[9px] flex-1">切削参数</span>
      <X size={16} strokeWidth={2.8} />
    </div>
    <div className="pt-[10px] px-[11px]">
      <div className="flex gap-[1px] ml-[1px]">
        <TabCell w="w-[97px]" h="h-[28px]" label="连接" />
        <TabCell w="w-[108px]" h="h-[28px]" label="空间范围" />
        <TabCell w="w-[96px]" h="h-[28px]" label="更多" />
      </div>
      <div className="flex ml-[1px]">
        <TabCell w="w-[100px]" label="策略" />
        <TabCell w="w-[104px]" label="余量" active />
        <TabCell w="w-[99px]" label="拐角" />
      </div>
    </div>
    <div className="mx-[10px] h-[346px] bg-white border border-[#c4c4c4] pt-[5px] shrink-0">
      <SectionHead title="余量" />
      <div className="flex items-center mt-[8px] ml-[15px] h-[18px] gap-[5px] text-[12px] text-[#333]">
        <span className="w-[13px] h-[13px] rounded-[2px] border border-[#777] bg-white" />
        使底面余量与侧面余量一致
      </div>
      <div className="pl-[15px] pr-[15px] mt-[2px]">
        <ParamRow label="部件侧面余量" v="0. 3000" lock h="h-[26px]" />
        <ParamRow label="部件底面余量" v="0. 1500" />
        <ParamRow label="毛坯余量" v="0. 0000" />
        <ParamRow label="检查余量" v="0. 0000" />
        <ParamRow label="修剪余量" v="0. 0000" />
      </div>
      <div className="mx-[6px] mt-[8px] h-[7px] border-t-2 border-b-2 border-[#dcdcdc]" />
      <div className="mt-[4px]">
        <SectionHead title="公差" />
      </div>
      <div className="pl-[15px] mt-[4px] pr-[15px]">
        <ParamRow label="内公差" v="0. 0500" lock h="h-[26px]" />
        <div className="flex items-center justify-between h-[26px]">
          <span className="text-[12px] text-[#333]">外公差</span>
          <div className="flex items-center">
            <NumInput v="0. 0500" />
            <span className="ml-[2px] w-[24px]" />
          </div>
        </div>
      </div>
      <div className="mx-[6px] mt-[7px] h-[2px] bg-[#dcdcdc]" />
    </div>
    <div className="h-[18px] flex items-center justify-center shrink-0 pt-[1px]">
      <svg width="10" height="5" viewBox="0 0 10 5"><path d="M0 0h10L5 5z" fill="#222" /></svg>
    </div>
    <div className="mx-[5px] h-px bg-[#d4d4d4] shrink-0" />
    <div className="flex justify-end gap-[5px] pr-[15px] pt-[7px]">
      <button className="w-[54px] h-[25px] bg-[#8fc6e6] border border-[#4a9ccc] text-[12px] text-[#333]">确定</button>
      <button className="w-[54px] h-[25px] bg-[#cdd0d5] border border-[#aeb0b4] text-[12px] text-[#333]">取消</button>
    </div>
  </div>
);

// ---- top bars ----
const RestoreGlyph = () => (
  <svg width="14" height="14" viewBox="0 0 14 14" className="mr-[1px]">
    <path d="M4 3V1h9v8h-3M1 4h9v9H1z" fill="none" stroke="#333" strokeWidth="1.300" />
    <path d="M1 5h9" stroke="#333" strokeWidth="1.600" />
  </svg>
);

const TitleBar = () => (
  <div className="relative flex items-center h-[26px] bg-white">
    <span className="ml-[4px] w-[34px] text-[25px] leading-none font-bold font-['Liberation_Sans',sans-serif] text-[#7091ad] tracking-[-1px]">NX</span>
    <Sep className="ml-[3px] mr-[9px]" />
    <SaveIcon />
    <Sep className="ml-[5px] mr-[5px]" />
    <UndoIcon />
    <Tri className="ml-[6px] mr-[4px]" />
    <Sep className="mr-[5px]" />
    <CutIcon />
    <span className="w-[4px]" />
    <CopyIcon />
    <span className="w-[5px]" />
    <PasteIcon />
    <Sep className="ml-[5px] mr-[6px]" />
    <StarIcon />
    <Tri className="ml-[4px] mr-[4px]" />
    <Sep className="mr-[6px]" />
    <BrushIcon />
    <Sep className="ml-[4px] mr-[5px]" />
    <WindowIcon />
    <span className="ml-[1px] text-[12px] text-[#111]">窗口</span>
    <Tri className="ml-[4px] mr-[3px]" />
    <svg width="7" height="7" viewBox="0 0 7 7"><path d="M0 0h7v1H0zM0 3h7L3.500 7z" fill="#222" /></svg>
    <span className="absolute left-[766px] top-[4px] text-[12.4px] leading-[18px] text-[#111] whitespace-pre">
      专业CNC培训.视频教程请联系QQ-434324903 UG10.0 - 加工 - [_model2_core_007.prt （修改的）
    </span>
    <span className="absolute left-[1320px] top-[4px] text-[12.4px] leading-[18px] text-[#111]">(!)]</span>
    <span className="absolute left-[1766px] top-[6px] text-[13px] leading-4 font-bold tracking-[.6px] font-['Liberation_Sans',sans-serif] text-[#009999]">SIEMENS</span>
    <div className="absolute right-[5px] top-[5px] flex items-center gap-[8px] text-[#333]">
      <Minus size={16} strokeWidth={2} className="mt-[9px]" />
      <RestoreGlyph />
      <X size={17} strokeWidth={2} />
    </div>
  </div>
);

const tabs = ['装配', '曲线', '分析', '视图', '渲染', '工具'];
const MenuBar = () => (
  <div className="flex items-center h-[28px] bg-[#c8d7d5]">
    <div className="w-[81px] h-full bg-[#5b8a82] text-white text-[13px] flex items-center justify-center pr-[4px]">文件(F)</div>
    <div className="ml-[1px] w-[53px] h-full bg-white border-t-2 border-[#c4c4c4] text-[13px] text-[#2a86c4] flex items-center justify-center">主页</div>
    {tabs.map((t) => (
      <div key={t} className="w-[52px] text-center text-[13px] text-[#222]">{t}</div>
    ))}
    <div className="w-[78px] text-center text-[13px] text-[#222]">应用模块</div>
    <div className="ml-auto flex items-center pr-[5px]">
      <div className="w-[124px] h-[20px] bg-white border border-[#aeaeae] flex items-center justify-between px-[2px] text-[12px] text-[#222]">
        加工
        <Search size={14} strokeWidth={1.6} className="-scale-x-100 text-[#444]" />
      </div>
      <svg width="16" height="16" viewBox="0 0 16 16" className="ml-[11px]">
        <path d="M1 4V1h3M12 1h3v3M15 12v3h-3M4 15H1v-3" fill="none" stroke="#666" />
        <rect x="3.500" y="3.500" width="9" height="9" fill="#fff" stroke="#345" />
        <rect x="4.500" y="4.500" width="7" height="5" fill="#3a7bd0" />
      </svg>
      <svg width="14" height="10" viewBox="0 0 14 10" className="ml-[13px]">
        <path d="M1 9l6-7 6 7" fill="none" stroke="#222" strokeWidth="1.600" />
        <path d="M3 9l4-4 4 4" fill="none" stroke="#fff" />
      </svg>
      <svg width="15" height="15" viewBox="0 0 15 15" className="ml-[12px]">
        <circle cx="7.500" cy="7.500" r="7" fill="#3b6fd0" />
        <text x="7.500" y="11.500" fontSize="11" fontWeight="700" textAnchor="middle" fill="#fff" fontFamily="'Liberation Sans',sans-serif">?</text>
      </svg>
      <svg width="17" height="13" viewBox="0 0 17 13" className="ml-[10px]">
        <path d="M0 4l8-3 9 3-9 3z" fill="#222" />
        <path d="M4 6v4c2 2 6 2 8 0V6L8 8z" fill="#333" />
        <path d="M15 5v6" stroke="#2230c8" strokeWidth="1.400" />
      </svg>
      <span className="ml-[4px] text-[12px] text-[#333]">教程</span>
      <Minus size={16} strokeWidth={2} className="ml-[4px] mt-[9px] text-[#222]" />
      <span className="ml-[6px]"><RestoreGlyph /></span>
      <X size={17} strokeWidth={2} className="ml-[7px] text-[#a6b2b0]" />
    </div>
  </div>
);

const App = () => (
  <div className="relative w-[1920px] h-[1040px] overflow-hidden bg-white font-['Noto_Sans','Noto_Sans_CJK_SC',sans-serif]">
    <TitleBar />
    <MenuBar />
    <Ribbon />
    <Toolbar />
    <div className="flex h-[831px] bg-[#dcdcdc] border-t border-[#a8a8a8]">
      <LeftStrip />
      <Navigator />
      <div className="w-[6px] shrink-0" />
      <Graphics />
    </div>
    <div className="relative h-[21px] bg-white border-t border-[#bdbdbd] flex items-center text-[11px] text-[#111]">
      <span className="ml-[3px] font-medium">指定切削参数</span>
      <span className="absolute left-[916px] top-[2px] font-bold text-[11.500px]">当前：CAVITY_MILL_D16R0.4</span>
      <span className="absolute left-[1828px] top-[5px] text-[11px] text-[#8a8a8a]">CSDN @hjhcos</span>
      <svg width="14" height="14" viewBox="0 0 14 14" className="absolute left-[1850px] top-[1px]">
        <path d="M1 4V1h3M10 1h3v3M13 10v3h-3M4 13H1v-3" fill="none" stroke="#777" />
        <rect x="4" y="4" width="6" height="6" fill="#3a7bd0" />
      </svg>
    </div>
    <div className="h-[9px] bg-gradient-to-r from-[#d3e5c8] via-[#e6efb0] to-[#d5e5c8]" />
    <CutParamsDialog />
  </div>
);

export default App;
